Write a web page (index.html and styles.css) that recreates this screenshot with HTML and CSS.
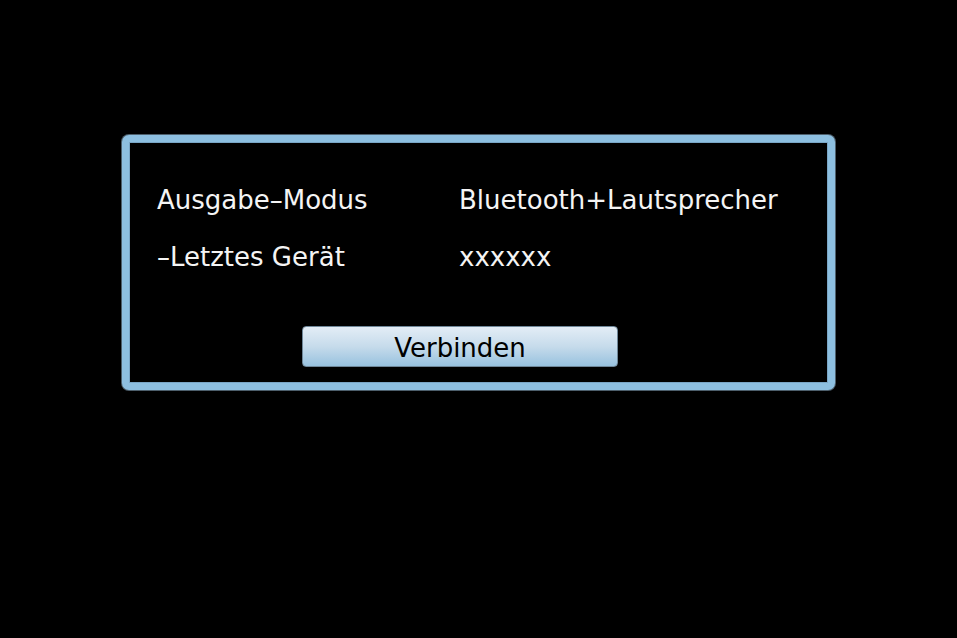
FILE: index.html
```html
<!DOCTYPE html>
<html lang="de">
<head>
<meta charset="utf-8">
<title>Bluetooth</title>
<link rel="stylesheet" href="styles.css">
</head>
<body>
<div class="screen">
  <div class="dialog">
    <div class="rows">
      <div class="row"><span class="label">Ausgabe–Modus</span><span class="value">Bluetooth+Lautsprecher</span></div>
      <div class="row"><span class="label">–Letztes Gerät</span><span class="value">xxxxxx</span></div>
    </div>
    <div class="actions">
      <button class="btn">Verbinden</button>
    </div>
  </div>
</div>
</body>
</html>
```

FILE: styles.css
```css
html, body {
  margin: 0;
  padding: 0;
  background: #000;
}
.screen {
  width: 957px;
  height: 638px;
  padding-top: 135px;
  padding-left: 122px;
  box-sizing: border-box;
  font-family: "DejaVu Sans", sans-serif;
  color: #fff;
}
.dialog {
  width: 713px;
  height: 255px;
  box-sizing: border-box;
  border: 7px solid #8dbfe0;
  border-radius: 7px;
  background: #000;
  box-shadow: 0 0 0 1px #4d5f6c, inset 0 0 0 1px #7aa6c6;
  display: flex;
  flex-direction: column;
  padding: 41px 0 0 28px;
}
.rows {
  display: flex;
  flex-direction: column;
  gap: 23px;
}
.row {
  display: grid;
  grid-template-columns: 302px auto;
  font-size: 26px;
  line-height: 34px;
  color: #f4f4f4;
}
.actions {
  display: flex;
  padding-left: 145px;
  margin-top: 52px;
}
.btn {
  width: 316px;
  height: 41px;
  border: 1px solid #6f8799;
  border-radius: 4px;
  background: linear-gradient(#e3edf6, #c6dbeb 50%, #98c2df);
  font-family: "DejaVu Sans", sans-serif;
  font-size: 26px;
  color: #000;
  padding: 3px 0 0;
  line-height: 36px;
}
```
